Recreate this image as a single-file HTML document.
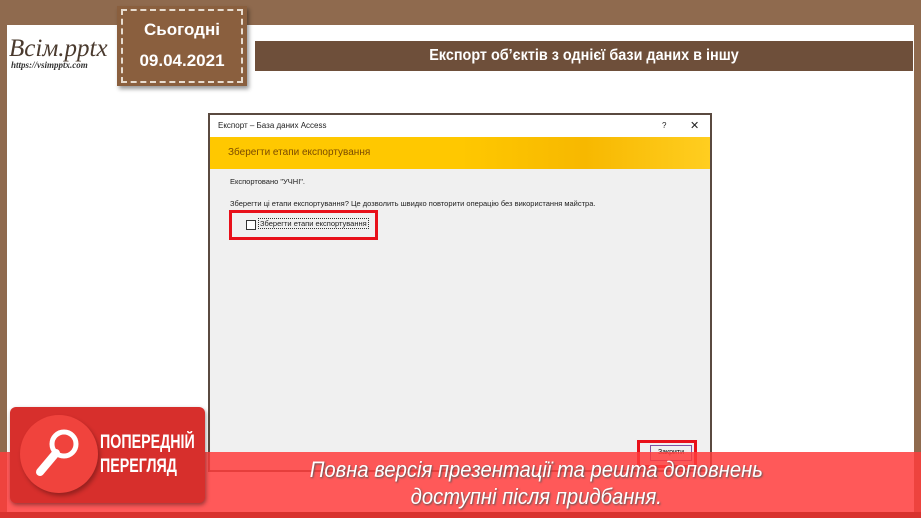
<!DOCTYPE html><html><head><meta charset="utf-8"><style>
body{margin:0;width:921px;height:518px;overflow:hidden;position:relative;background:#8f6a4e;font-family:"Liberation Sans",sans-serif}
.a{position:absolute}
</style></head><body>
<div class="a" style="left:7px;top:25px;width:907px;height:493px;background:#fff"></div>
<div class="a" style="left:9px;top:35px;font-family:'Liberation Serif',serif;font-style:italic;font-size:25px;color:#4a3a2e">Всім.pptx</div>
<div class="a" style="left:11px;top:60px;font-family:'Liberation Serif',serif;font-style:italic;font-weight:bold;font-size:9px;color:#333">https://vsimpptx.com</div>
<div class="a" style="left:117px;top:6px;width:130px;height:80px;background:#8a5f3e;box-shadow:2px 3px 4px rgba(0,0,0,.4)"><div style="position:absolute;left:4px;top:3px;right:4px;bottom:3px;border:2px dashed #e8dccf"></div>
<div style="position:absolute;width:100%;top:14px;text-align:center;color:#fff;font-weight:bold;font-size:17px">Сьогодні</div>
<div style="position:absolute;width:100%;top:45px;text-align:center;color:#fff;font-weight:bold;font-size:17px">09.04.2021</div></div>
<div class="a" style="left:255px;top:41px;width:658px;height:30px;background:#6e4f3a;color:#fff;font-weight:bold;font-size:16px;line-height:30px;text-align:center"><span style="display:inline-block;transform:scaleX(.9)">Експорт об’єктів з однієї бази даних в іншу</span></div>
<div class="a" style="left:208px;top:113px;width:500px;height:355px;background:#f0f0f0;border:2px solid #5a4a40">
<div style="height:22px;background:#fff;font-size:8px;line-height:22px;padding-left:8px;color:#222">Експорт – База даних Access<span style="position:absolute;left:452px">?</span><span style="position:absolute;left:480px;font-size:11px">✕</span></div>
<div style="height:32px;background:linear-gradient(90deg,#ffc800 50%,#f7b800 75%,#ffce20);color:#7a4a00;font-size:10px;line-height:32px;padding-left:18px">Зберегти етапи експортування</div>
<div style="position:absolute;left:20px;top:62px;font-size:7.5px;color:#222">Експортовано "УЧНІ".</div>
<div style="position:absolute;left:20px;top:84px;font-size:7.5px;color:#222">Зберегти ці етапи експортування? Це дозволить швидко повторити операцію без використання майстра.</div>
<div style="position:absolute;left:36px;top:105px;width:8px;height:8px;border:1px solid #333;background:#fff"></div>
<div style="position:absolute;left:48px;top:103px;font-size:7.5px;border:1px dotted #333;padding:0 1px;color:#222">Зберегти етапи експортування</div>
<div style="position:absolute;left:440px;top:330px;width:40px;height:14px;border:1px solid #8050a0;font-size:7px;line-height:14px;text-align:center">Закрити</div>
</div>
<div class="a" style="left:637px;top:440px;width:60px;height:28px;border:3px solid #e8101a;box-sizing:border-box"></div>
<div class="a" style="left:229px;top:210px;width:149px;height:30px;border:3px solid #e8101a;box-sizing:border-box"></div>
<div class="a" style="left:0;top:452px;width:921px;height:60px;background:rgba(255,60,60,.85)"></div>
<div class="a" style="left:0;top:512px;width:921px;height:6px;background:#d8322e"></div>
<div class="a" style="left:236px;top:456px;width:600px;text-align:center;color:#fff;font-style:italic;font-size:22px;line-height:27px;text-shadow:1px 1px 2px #555"><span style="display:inline-block;transform:scaleX(.92)">Повна версія презентації та решта доповнень<br>доступні після придбання.</span></div>
<div class="a" style="left:10px;top:407px;width:195px;height:96px;background:#d72f2c;border-radius:6px;box-shadow:1px 2px 4px rgba(0,0,0,.4)">
<div style="position:absolute;left:10px;top:8px;width:78px;height:78px;border-radius:50%;background:#f0433d;box-shadow:2px 3px 4px rgba(0,0,0,.3)"></div>
<svg style="position:absolute;left:18px;top:15px" width="62" height="62"><circle cx="36" cy="22" r="12" fill="none" stroke="#fff" stroke-width="5"/><path d="M28 31 L12 50" stroke="#fff" stroke-width="8" stroke-linecap="round"/></svg>
<div style="position:absolute;left:90px;top:24px;color:#fff;font-weight:bold;font-size:19px;line-height:24px;transform:scaleX(.75);transform-origin:left">ПОПЕРЕДНІЙ<br>ПЕРЕГЛЯД</div></div>
</body></html>
